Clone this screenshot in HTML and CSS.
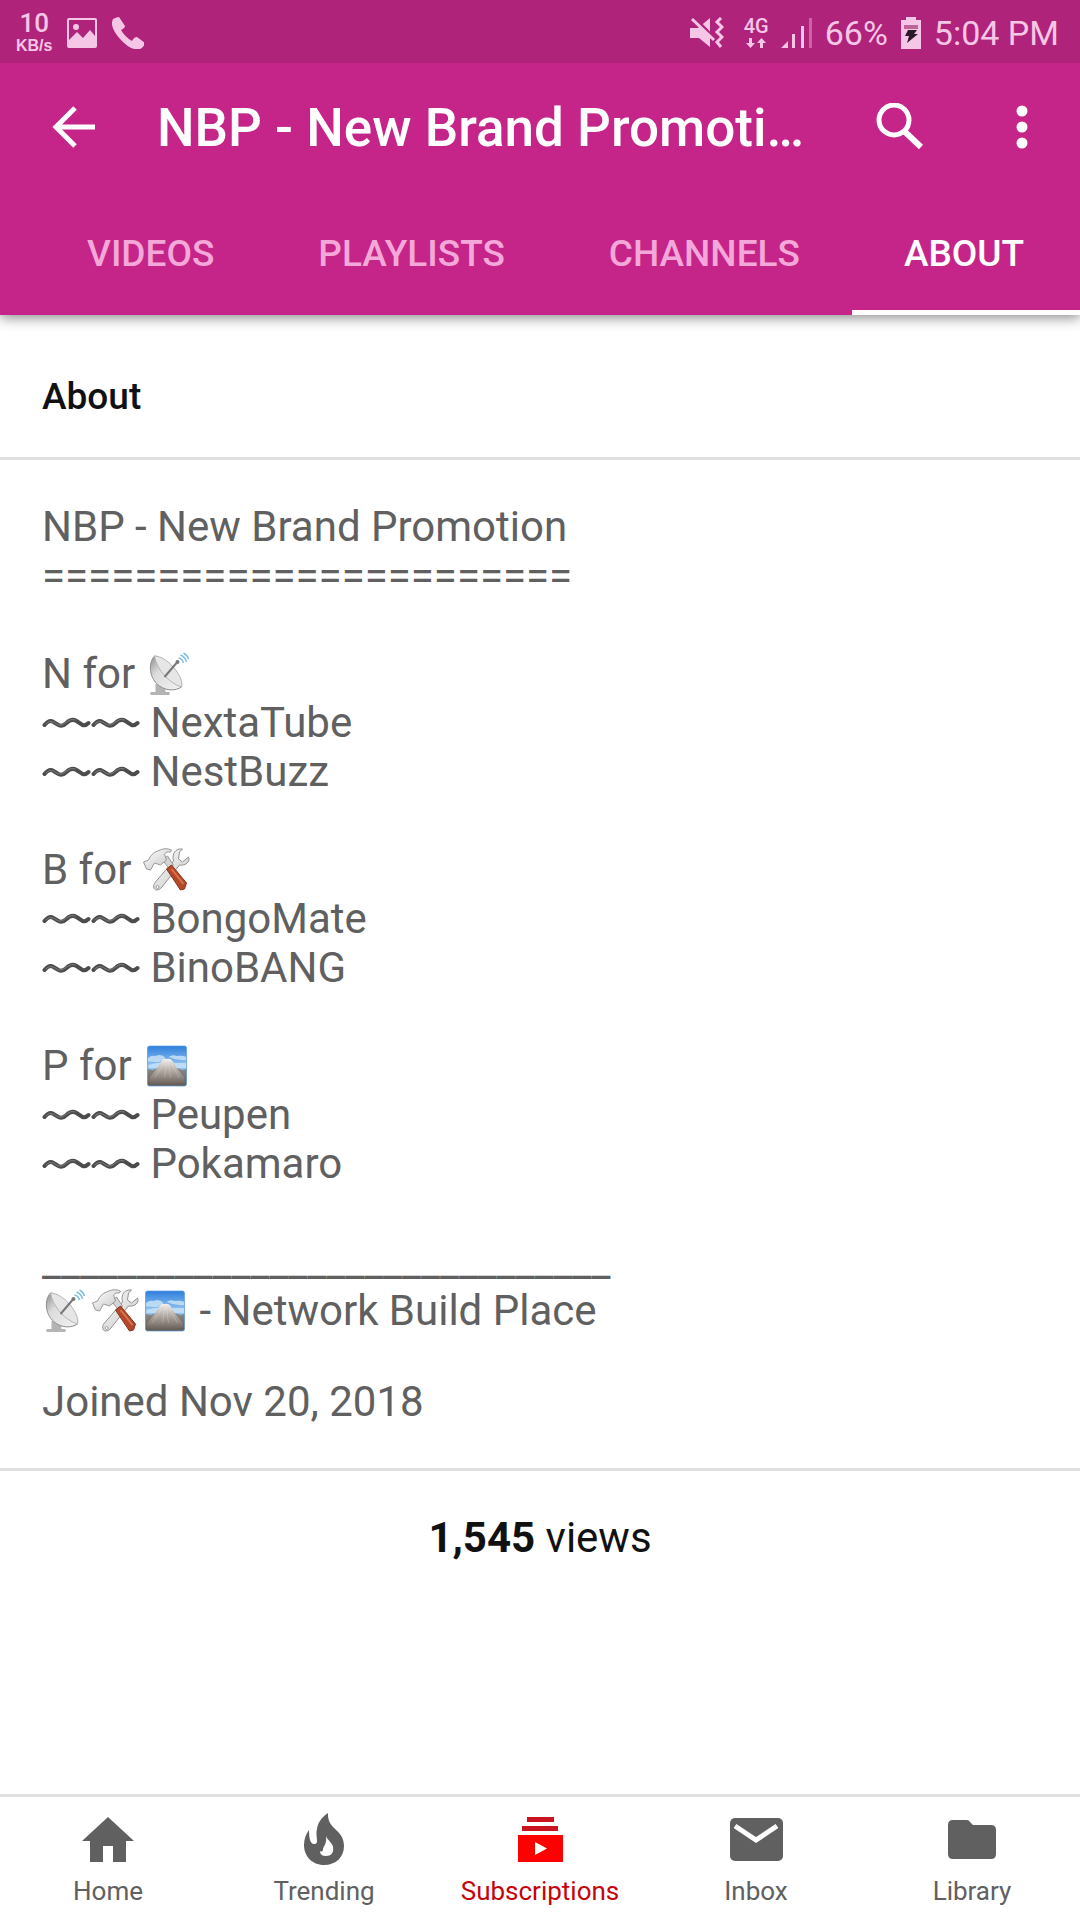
FILE: index.html
```html
<!DOCTYPE html>
<html lang="en">
<head>
<meta charset="utf-8">
<meta name="viewport" content="width=device-width, initial-scale=1">
<title>NBP - New Brand Promotion</title>
<link rel="stylesheet" href="styles.css">
</head>
<body>
<svg class="defs" aria-hidden="true">
  <defs>
    <linearGradient id="dishFill" x1="0" y1="0" x2="1" y2="1">
      <stop offset="0" stop-color="#8c8c8c"/><stop offset=".35" stop-color="#dcdcdc"/><stop offset="1" stop-color="#f2f2f2"/>
    </linearGradient>
    <linearGradient id="sky" x1="0" y1="0" x2="0" y2="1">
      <stop offset="0" stop-color="#2f7fdc"/><stop offset=".45" stop-color="#8cc0f0"/>
    </linearGradient>
    <linearGradient id="slope" x1="0" y1="0" x2="0" y2="1">
      <stop offset="0" stop-color="#f4f2f0"/><stop offset=".45" stop-color="#b5ada6"/><stop offset="1" stop-color="#6c625b"/>
    </linearGradient>
    <linearGradient id="ground" x1="0" y1="0" x2="0" y2="1">
      <stop offset="0" stop-color="#8b8a88"/><stop offset="1" stop-color="#645a53"/>
    </linearGradient>
    <linearGradient id="steel" x1="0" y1="0" x2="1" y2="1">
      <stop offset="0" stop-color="#ffffff"/><stop offset="1" stop-color="#c4c4c4"/>
    </linearGradient>
    <symbol id="dish" viewBox="0 0 48 48">
      <path d="M9 34h9l1 8h4v3H4v-3h5z" fill="#b4b4b4"/>
      <path d="M8 6C1 14 3 29 13 36c7 5 16 5 22 1C35 27 20 8 8 6z" fill="url(#dishFill)" stroke="#8d8d8d"/>
      <path d="M8 6c13 0 30 21 27 31C24 34 10 20 8 6z" fill="#e6e6e6" stroke="#b5b5b5"/>
      <path d="M18 27L30 13" stroke="#777" stroke-width="2"/>
      <circle cx="31" cy="12" r="2" fill="#777"/>
      <path d="M32 8q4 1 5 5M34 5q5 2 6 7M37 3q4 2 5 6" fill="none" stroke="#7fbfe4" stroke-width="1.500"/>
    </symbol>
    <symbol id="tools" viewBox="0 0 48 48">
      <path d="M46 11l-6 5-4-3 1-7 3-3c-7-1-11 5-9 12L13 36c-3 3-2 8 1 8s5-2 7-5l16-20c6 1 11-3 9-8z" fill="url(#steel)" stroke="#929292"/>
      <circle cx="15" cy="41" r="1.500" fill="#fff" stroke="#999"/>
      <path d="M20 14l5-4 6 9-4 4z" fill="#d5d5d5" stroke="#999"/>
      <path d="M24 23l5-4 15 18-2 6-4 1z" fill="#b4492a" stroke="#86321c"/>
      <path d="M29 23l12 15" stroke="#d9744d" stroke-width="2"/>
      <path d="M1 16l5-2q3-7 9-9 8-4 14-1l-1 2q-4-1-6 2l2 6-6 5-6-2-4 7-4-1z" fill="url(#steel)" stroke="#999"/>
    </symbol>
    <symbol id="mountain" viewBox="0 0 48 48">
      <rect x="5" y="4" width="39" height="40" rx="2" fill="url(#sky)"/>
      <path d="M5 17q3-4 8-3 6-3 10 2l-6 4q-8 0-12-1zM26 15q4-3 8-1 6-1 10 1v3q-9 1-18-3zM6 23q9-3 16-2h22v5H6z" fill="#c7e1f5" opacity=".85"/>
      <path d="M5 27l5 1 6-2h18l6 2 4-1v15q0 2-2 2H7q-2 0-2-2z" fill="url(#ground)"/>
      <path d="M7 36l7-9 5-8q2-3 5-2 4-1 6 2l5 8 7 9v5q-18 2-35 0z" fill="url(#slope)"/>
      <path d="M21 22l-9 14M24 21l-2 15M26 21l2 15M29 22l8 14" stroke="#fff" stroke-width="1" opacity=".2"/>
      <rect x="5" y="4" width="39" height="40" rx="2" fill="none" stroke="#5d9be0" stroke-width="1" opacity=".7"/>
    </symbol>
    <symbol id="wave" viewBox="0 0 48 24">
      <path d="M2 14q5-6 9-3l5 3q4 2 8-2 5-5 10-2l6 4q3 1 6-2" fill="none" stroke="#4c4c4c" stroke-width="4" stroke-linecap="round"/>
      <path d="M3 13q4-4 8-2l5 3q4 1 8-3 5-4 9-2" fill="none" stroke="#7c7c7c" stroke-width="1"/>
    </symbol>
  </defs>
</svg>

<div class="screen">
  <header class="top">
    <div class="status">
      <div class="status-group">
        <div class="speed"><span class="speed-value">10</span><span class="speed-unit">KB/s</span></div>
        <svg class="status-icon" viewBox="0 0 32 32" aria-hidden="true"><path fill-rule="evenodd" d="M3 1h26q2 0 2 2v26q0 2-2 2H3q-2 0-2-2V3q0-2 2-2zm0 2v20l8-8 6 6 7-8 5 6V3z"/><circle cx="10" cy="10" r="3"/></svg>
        <svg class="status-icon phone" viewBox="0 0 32 32" aria-hidden="true"><path d="M1 2Q5 0 7 0l6 9q0 2-4 4 4 7 11 11 2-4 5-4l8 6q-1 4-5 6Q19 34 9 23-1 12 0 5z"/></svg>
      </div>
      <div class="status-group right">
        <svg class="mute" viewBox="0 0 34 32" aria-hidden="true"><path d="M0 11h8L20 1v29L9 21H0z"/><path d="M4 0l22 23" fill="none" stroke="#af237a" stroke-width="3"/><path d="M2 2l22 21" fill="none" stroke="#f6c6e6" stroke-width="3"/><path d="M31 1l-4 4 5 5-5 5 5 5-5 5 4 5" fill="none" stroke="#f6c6e6" stroke-width="3"/></svg>
        <div class="network"><span>4G</span><svg viewBox="0 0 20 10" aria-hidden="true"><path d="M3 0h3v5h3l-4.500 5L0 5h3zM14 10h3V5h3l-4.500-5L11 5h3z"/></svg></div>
        <svg class="signal" viewBox="0 0 32 32" aria-hidden="true"><path d="M0 31l7-7v7zM11 17h3v14h-3zM20 9h3v22h-3z"/><path d="M28 1h3v30h-3z" opacity=".4"/></svg>
        <span class="status-text">66%</span>
        <svg class="battery" viewBox="0 0 22 32" aria-hidden="true"><path d="M6 0h10v3h5v29H1V3h5z"/><path d="M4 8h14v4H4z" fill="#bd6599"/><path d="M8 13h9l-3 4h4L7 26l2-7H5z" fill="#2b1a2a"/></svg>
        <span class="status-text">5:04 PM</span>
      </div>
    </div>
    <div class="appbar">
      <button class="icon-button" aria-label="Back"><svg class="back" viewBox="0 0 44 44"><path d="M43 22H5M23 3L4 22l19 19" fill="none" stroke="#fff" stroke-width="5"/></svg></button>
      <h1 class="title">NBP - New Brand Promoti…</h1>
      <button class="icon-button" aria-label="Search"><svg class="search" viewBox="0 0 48 48"><circle cx="18" cy="17" r="15" fill="none" stroke="#fff" stroke-width="5"/><path d="M28 28l17 16" stroke="#fff" stroke-width="6"/></svg></button>
      <button class="icon-button more" aria-label="More options"><svg class="dots" viewBox="0 0 12 44"><circle cx="6" cy="6" r="5.500"/><circle cx="6" cy="22" r="5.500"/><circle cx="6" cy="38" r="5.500"/></svg></button>
    </div>
    <nav class="tabs" aria-label="Channel">
      <a class="tab" href="#videos">VIDEOS</a>
      <a class="tab" href="#playlists">PLAYLISTS</a>
      <a class="tab" href="#channels">CHANNELS</a>
      <a class="tab active" href="#about" aria-current="page">ABOUT</a>
    </nav>
  </header>

  <main class="content" id="about">
    <h2 class="heading">About</h2>
    <section class="details">
      <p>NBP - New Brand Promotion<br>=======================</p>
      <p>N for <svg class="emoji"><use href="#dish"/></svg><br>
        <svg class="wave"><use href="#wave"/></svg><svg class="wave"><use href="#wave"/></svg> NextaTube<br>
        <svg class="wave"><use href="#wave"/></svg><svg class="wave"><use href="#wave"/></svg> NestBuzz</p>
      <p>B for <svg class="emoji"><use href="#tools"/></svg><br>
        <svg class="wave"><use href="#wave"/></svg><svg class="wave"><use href="#wave"/></svg> BongoMate<br>
        <svg class="wave"><use href="#wave"/></svg><svg class="wave"><use href="#wave"/></svg> BinoBANG</p>
      <p>P for <svg class="emoji"><use href="#mountain"/></svg><br>
        <svg class="wave"><use href="#wave"/></svg><svg class="wave"><use href="#wave"/></svg> Peupen<br>
        <svg class="wave"><use href="#wave"/></svg><svg class="wave"><use href="#wave"/></svg> Pokamaro</p>
      <p>______________________________<br><svg class="emoji"><use href="#dish"/></svg><svg class="emoji"><use href="#tools"/></svg><svg class="emoji"><use href="#mountain"/></svg> - Network Build Place</p>
      <p class="joined">Joined Nov 20, 2018</p>
    </section>
    <p class="views"><strong>1,545</strong> views</p>
  </main>

  <nav class="bottom" aria-label="Main">
    <a class="item" href="#home"><svg viewBox="0 0 54 54"><path d="M27 4l26 24h-8v21H32V33H22v16H9V28H1z"/></svg><span>Home</span></a>
    <a class="item" href="#trending"><svg viewBox="0 0 54 54"><path fill-rule="evenodd" d="M31 0c-1 17 16 16 16 33 0 11-8 19-20 19S7 43 7 32c0-6 2-11 5-15 0 7 1 14 5 14 6 0 1-7 3-15 1-7 5-12 11-16zm-2 23c1 8-2 9-3 13 0 3-2 3-3 2 0 4 3 5 6 5 5 0 8-3 7-9-1-5-5-6-7-11z"/></svg><span>Trending</span></a>
    <a class="item selected" href="#subscriptions" aria-current="page"><svg viewBox="0 0 54 54"><path d="M14 4h27v5H14zM9 13h36v5H9z" fill="#c8141e"/><path fill-rule="evenodd" d="M5 22h45v27H5zm17 7v13l12-6.500z"/></svg><span>Subscriptions</span></a>
    <a class="item" href="#inbox"><svg viewBox="0 0 54 54"><rect x="1" y="5" width="53" height="43" rx="5"/><path d="M6 13l21 14 21-14" fill="none" stroke="#fff" stroke-width="5"/></svg><span>Inbox</span></a>
    <a class="item" href="#library"><svg viewBox="0 0 54 54"><path d="M8 7h14q2 0 3 2l3 3h18q5 0 5 5v24q0 5-5 5H8q-5 0-5-5V12q0-5 5-5z"/></svg><span>Library</span></a>
  </nav>
</div>
</body>
</html>
```
FILE: styles.css
```css
* {
  box-sizing: border-box;
}

body {
  margin: 0;
  background: #fff;
  color: #606060;
  font-family: Roboto, "Liberation Sans", sans-serif;
}

h1,
h2,
p {
  margin: 0;
}

a {
  color: inherit;
  text-decoration: none;
}

svg {
  flex: none;
}

.defs {
  display: block;
  width: 0;
  height: 0;
}

.screen {
  display: flex;
  flex-direction: column;
  min-height: 100vh;
}

.top {
  background: #c52588;
  color: #fff;
  box-shadow: 0 3px 12px rgba(0, 0, 0, 0.45);
}

.status {
  display: flex;
  justify-content: space-between;
  height: 63px;
  padding: 2px 21px 0 16px;
  background: #af237a;
  color: #f6c6e6;
  fill: #f6c6e6;
}

.status-group {
  display: flex;
  align-items: center;
  gap: 14px;
}

.status-group.right {
  gap: 12px;
}

.speed {
  display: flex;
  flex-direction: column;
  align-items: center;
  font-weight: 500;
}

.speed-value {
  font-size: 26px;
  line-height: 27px;
}

.speed-unit {
  font-family: "Liberation Sans", sans-serif;
  font-size: 16px;
  font-weight: 700;
  line-height: 18px;
}

.status-icon {
  width: 32px;
  height: 32px;
}

.mute {
  width: 34px;
  height: 32px;
  margin-right: 8px;
}

.network {
  display: flex;
  flex-direction: column;
  align-items: center;
  gap: 3px;
  font-size: 20px;
  font-weight: 500;
  line-height: 18px;
}

.network svg {
  width: 20px;
  height: 10px;
}

.signal {
  width: 32px;
  height: 32px;
}

.battery {
  width: 22px;
  height: 32px;
}

.status-text {
  font-size: 34px;
  line-height: 40px;
}

.appbar {
  display: flex;
  align-items: center;
  height: 128px;
  padding: 0 32px 0 48px;
}

.icon-button {
  display: flex;
  align-items: center;
  justify-content: center;
  width: 52px;
  height: 72px;
  padding: 0;
  border: 0;
  background: none;
  fill: #fff;
}

.back {
  width: 44px;
  height: 44px;
}

.search {
  width: 48px;
  height: 48px;
}

.dots {
  width: 12px;
  height: 44px;
}

.title {
  flex: 1;
  min-width: 0;
  margin: 0 36px 0 57px;
  padding-top: 2px;
  font-size: 53px;
  font-weight: 500;
  line-height: 64px;
  white-space: nowrap;
}

.more {
  margin-left: 70px;
}

.tabs {
  display: flex;
  height: 124px;
  padding-left: 35px;
}

.tab {
  display: flex;
  align-items: center;
  padding: 5px 52px 0;
  border-bottom: 5px solid transparent;
  color: #f4a8da;
  font-size: 37px;
  font-weight: 500;
}

.tab.active {
  flex: 1;
  border-color: #fff;
  color: #fff;
}

.content {
  flex: 1;
}

.heading {
  padding: 57px 42px 36px;
  border-bottom: 3px solid #e0e0e0;
  color: #111;
  font-size: 37px;
  font-weight: 500;
  line-height: 49px;
}

.details {
  display: flex;
  flex-direction: column;
  gap: 49px;
  padding: 42px;
  border-bottom: 3px solid #e0e0e0;
  font-size: 42px;
  line-height: 49px;
}

.details .joined {
  margin-top: -7px;
}

.emoji {
  width: 49px;
  height: 48px;
  vertical-align: -10px;
}

.wave {
  width: 49px;
  height: 24px;
  vertical-align: 2px;
}

.views {
  padding: 42px;
  color: #111;
  font-size: 42px;
  line-height: 49px;
  text-align: center;
}

.bottom {
  display: grid;
  grid-template-columns: repeat(5, 1fr);
  height: 126px;
  border-top: 3px solid #e0e0e0;
  font-size: 26px;
  line-height: 32px;
}

.item {
  display: flex;
  flex-direction: column;
  align-items: center;
  gap: 8px;
  padding-top: 16px;
  fill: #606060;
}

.item svg {
  width: 54px;
  height: 54px;
}

.item.selected {
  color: #c4040c;
  fill: #f00;
}
```
